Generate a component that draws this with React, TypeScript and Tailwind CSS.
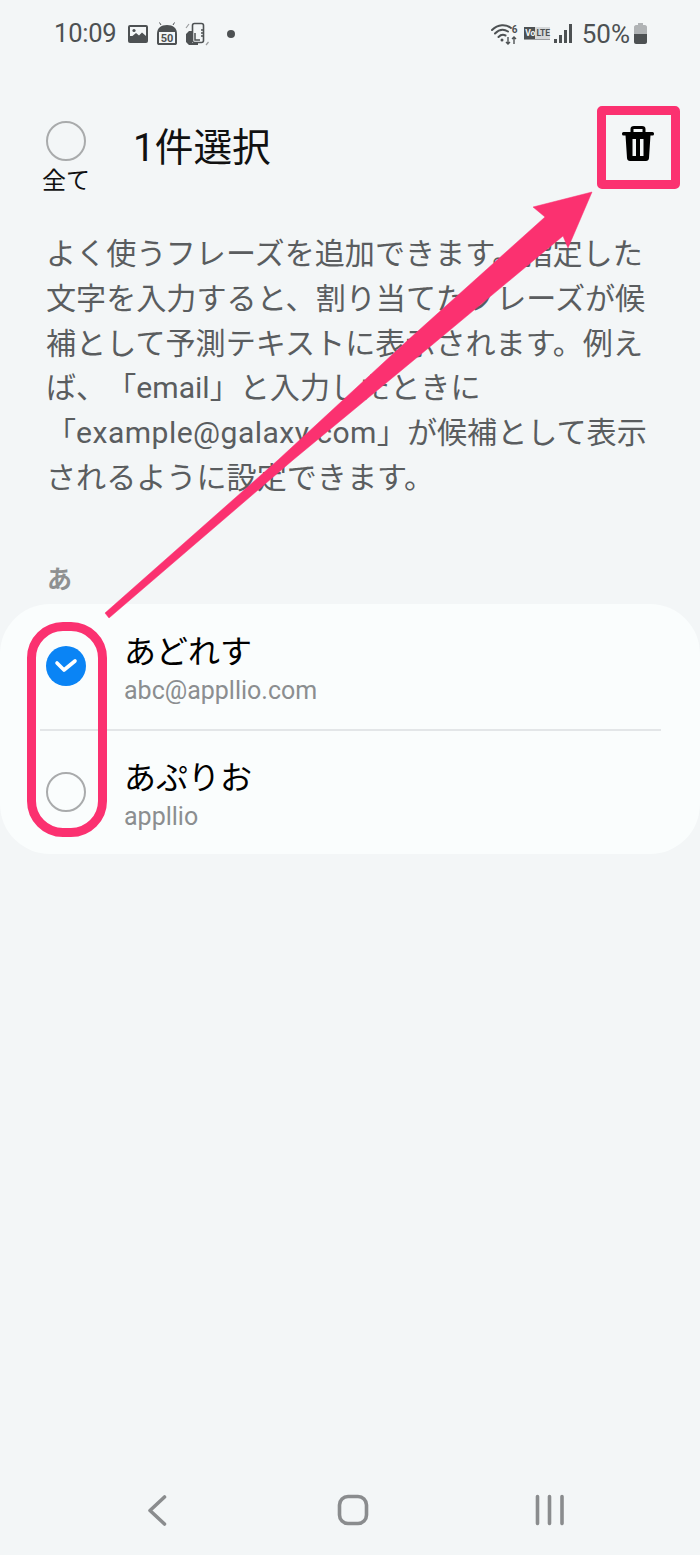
import React from 'react';

const jp = { fontFamily: 'Roboto, "Noto Sans CJK JP", sans-serif' };

const StatusBar: React.FC = () => (
  <div className="flex h-[66px] items-center justify-between pl-[54px] pr-[53px] pt-[1px] text-[#4d5153]">
    <div className="flex items-center">
      <span className="text-[25.5px] leading-none tracking-[-0.2px]">10:09</span>
      <svg width="20" height="20" viewBox="0 0 20 20" className="ml-[11px]">
        <rect x="0" y="1" width="20" height="18" rx="2" fill="#4d5153" />
        <rect x="2" y="3" width="16" height="9" fill="#f3f6f7" />
        <circle cx="6" cy="6.5" r="1.6" fill="#4d5153" />
        <path d="M2 14 L8 9 L11 11.5 L14 8.5 L18 12 V15 H2 Z" fill="#4d5153" />
      </svg>
      <svg width="22" height="24" viewBox="0 0 22 24" className="ml-[8px]">
        <path d="M1 12 C1 6 5 3 11 3 C17 3 21 6 21 12 V21 C21 22.5 20 23 19 23 H3 C2 23 1 22.5 1 21 Z" fill="#4d5153" />
        <path d="M5 3 L3.5 0.5 M17 3 L18.5 0.5" stroke="#4d5153" strokeWidth="1" />
        <rect x="3" y="10" width="16" height="11" fill="#f3f6f7" />
        <text x="11" y="20" textAnchor="middle" fontSize="11" fontWeight="700" fill="#4d5153" fontFamily="Roboto, sans-serif">50</text>
      </svg>
      <svg width="24" height="24" viewBox="0 0 24 24" className="ml-[7px]">
        <rect x="7.5" y="1.5" width="11" height="19" rx="2" fill="none" stroke="#4d5153" strokeWidth="1.6" />
        <path d="M1 12 L4 9 H7 V21 H13 V23 H4 L1 20 Z" fill="#4d5153" />
        <path d="M10 11 V18 H15" fill="none" stroke="#4d5153" strokeWidth="1.5" />
        <path d="M16 8 H19 M16 11 H19 M16 14 H19" stroke="#4d5153" strokeWidth="1.6" />
        <path d="M1 6 L4 2 M21 23 L23.5 20" stroke="#9a9d9f" strokeWidth="1.2" />
      </svg>
      <span className="ml-[18px] h-2 w-2 rounded-full bg-[#4d5153]" />
    </div>
    <div className="flex items-center">
      <svg width="28" height="22" viewBox="0 0 28 22">
        <path d="M1 7 C7 1 15 1 20 5 M4 10.5 C8 6.5 13 6 17 8.5 M7.5 14 C10 11.5 12.5 11.5 14.5 12.5" fill="none" stroke="#4d5153" strokeWidth="2" strokeLinecap="round" />
        <circle cx="11" cy="17" r="1.5" fill="#4d5153" />
        <path d="M17 14 V21 M15 19 L17 21 L19 19 M23 21 V14 M21 16 L23 14 L25 16" fill="none" stroke="#4d5153" strokeWidth="1.4" />
        <text x="23.5" y="10" textAnchor="middle" fontSize="10" fontWeight="700" fill="#4d5153" fontFamily="Roboto, sans-serif">6</text>
      </svg>
      <div className="ml-[5px] flex h-[13px] w-[26px] items-center border-b border-[#9a9d9f] bg-[#4d5153] text-[8.5px] font-bold leading-none">
        <span className="pl-[1px] text-[#f3f6f7]">Vo</span>
        <span className="flex h-full flex-1 items-center bg-[#d5d8da] pl-[1px] text-[#4d5153]">LTE</span>
      </div>
      <div className="ml-[4px] flex h-[19px] items-end gap-[2.5px]">
        <span className="h-[4px] w-[2.5px] bg-[#4d5153]" />
        <span className="h-[8px] w-[2.5px] bg-[#4d5153]" />
        <span className="h-[13px] w-[2.5px] bg-[#4d5153]" />
        <span className="h-[19px] w-[2.5px] bg-[#4d5153]" />
      </div>
      <span className="ml-[10px] text-[26px] leading-none">50%</span>
      <svg width="13" height="21" viewBox="0 0 13 21" className="ml-[4px]">
        <path d="M4 0 H9 V2 H11 C12 2 13 3 13 4 V11 H0 V4 C0 3 1 2 2 2 H4 Z" fill="#b0b3b5" />
        <path d="M0 11 H13 V19 C13 20 12 21 11 21 H2 C1 21 0 20 0 19 Z" fill="#4d5153" />
      </svg>
    </div>
  </div>
);

const Row: React.FC<{ title: string; sub: string; checked?: boolean }> = ({ title, sub, checked }) => (
  <div className="flex h-[125px] items-center pl-[46px]">
    {checked ? (
      <span className="flex h-10 w-10 items-center justify-center rounded-full bg-[#0a84f5]">
        <svg width="24" height="16" viewBox="0 0 24 16" fill="none" stroke="#fff" strokeWidth="3.6" strokeLinecap="round" strokeLinejoin="round">
          <path d="M3 5 L10 12 L21 3" />
        </svg>
      </span>
    ) : (
      <span className="-mt-[3px] h-10 w-10 rounded-full border-2 border-[#a9abac]" />
    )}
    <div className={checked ? 'ml-[38px] flex flex-col pt-[10px]' : 'ml-[38px] flex flex-col pt-[7px]'}>
      <span className="text-[32px] leading-[40px] text-black">{title}</span>
      <span className="text-[25px] leading-[38px] text-[#8b8e90]">{sub}</span>
    </div>
  </div>
);

export default function App() {
  return (
    <div className="relative flex h-[1555px] w-[700px] flex-col overflow-hidden bg-[#f3f6f7]" style={jp}>
      <StatusBar />

      <div className="flex h-[166px] items-start pl-[43px] pt-[55px]">
        <div className="flex w-[46px] flex-col items-center">
          <span className="h-10 w-10 rounded-full border-2 border-[#a9abac]" />
          <span className="mt-[5px] whitespace-nowrap text-[24px] leading-[30px] text-[#111]">全て</span>
        </div>
        <h1 className="ml-[44px] mt-[4px] text-[38.7px] font-normal leading-[46px] text-[#111]">1件選択</h1>
        <svg width="32" height="36" viewBox="0 0 32 36" className="ml-auto mr-[46px] mt-[5px]">
          <path d="M10 6 V3 C10 2 11 1.5 12 1.5 H20 C21 1.5 22 2 22 3 V6" fill="none" stroke="#000" strokeWidth="3" />
          <rect x="0" y="6" width="32" height="3.5" rx="1.5" fill="#000" />
          <path d="M3.5 9 H28.5 L27 32 C27 34 25.5 35 24 35 H8 C6.5 35 5 34 5 32 Z" fill="#000" />
          <rect x="10.5" y="13" width="3.5" height="17" fill="#f3f6f7" />
          <rect x="18" y="13" width="3.5" height="17" fill="#f3f6f7" />
        </svg>
      </div>

      <p className="whitespace-nowrap pl-[46px] text-[30.1px] leading-[44.8px] text-[#5a5d5f] [text-spacing-trim:space-all]">
        よく使うフレーズを追加できます。指定した<br />
        文字を入力すると、割り当てたフレーズが候<br />
        補として予測テキストに表示されます。例え<br />
        ば、「email」と入力したときに<br />
        「<span className="tracking-[0.45px]">example@galaxy.com</span>」が候補として表示<br />
        されるように設定できます。
      </p>

      <div className="mt-[62px] pl-[47px] text-[25px] font-bold leading-[34px] text-[#8e9091]">あ</div>

      <div className="mt-[7px] h-[250px] rounded-[50px] bg-[#fafdfd]">
        <Row title="あどれす" sub="abc@appllio.com" checked />
        <div className="ml-[40px] mr-[39px] h-[2px] bg-[#e3e6e8]" />
        <Row title="あぷりお" sub="appllio" />
      </div>

      <div className="mt-auto flex h-[90px] items-center pb-[1px]">
        <svg width="700" height="34" viewBox="0 0 700 34" fill="none" stroke="#8a8c8e" strokeLinecap="round" strokeLinejoin="round">
          <path d="M164.5 4 L150 17.5 L164.5 31" strokeWidth="3.6" />
          <rect x="339.5" y="3.5" width="27" height="27" rx="8.5" strokeWidth="3.6" />
          <path d="M537.5 3.5 V30.5 M549.5 3.5 V30.5 M562 3.5 V30.5" strokeWidth="3.6" />
        </svg>
      </div>

      <div className="absolute left-[597px] top-[106px] h-[83px] w-[83px] rounded-[5px] border-[9px] border-[#fb3170]" />
      <div className="absolute left-[27px] top-[622px] h-[215px] w-[80px] rounded-[36px] border-[9px] border-[#fb3170]" />
      <svg width="700" height="700" viewBox="0 0 700 700" className="absolute left-0 top-0">
        <path
          d="M105 613 L109 618 L293 460 L420 355 L563 236 L568 248 L592 192 L533 207 L545 217 L408 340 L278 460 Z"
          fill="#fb3170"
          stroke="#fb3170"
          strokeWidth="0.5"
          strokeLinejoin="round"
        />
      </svg>
    </div>
  );
}
